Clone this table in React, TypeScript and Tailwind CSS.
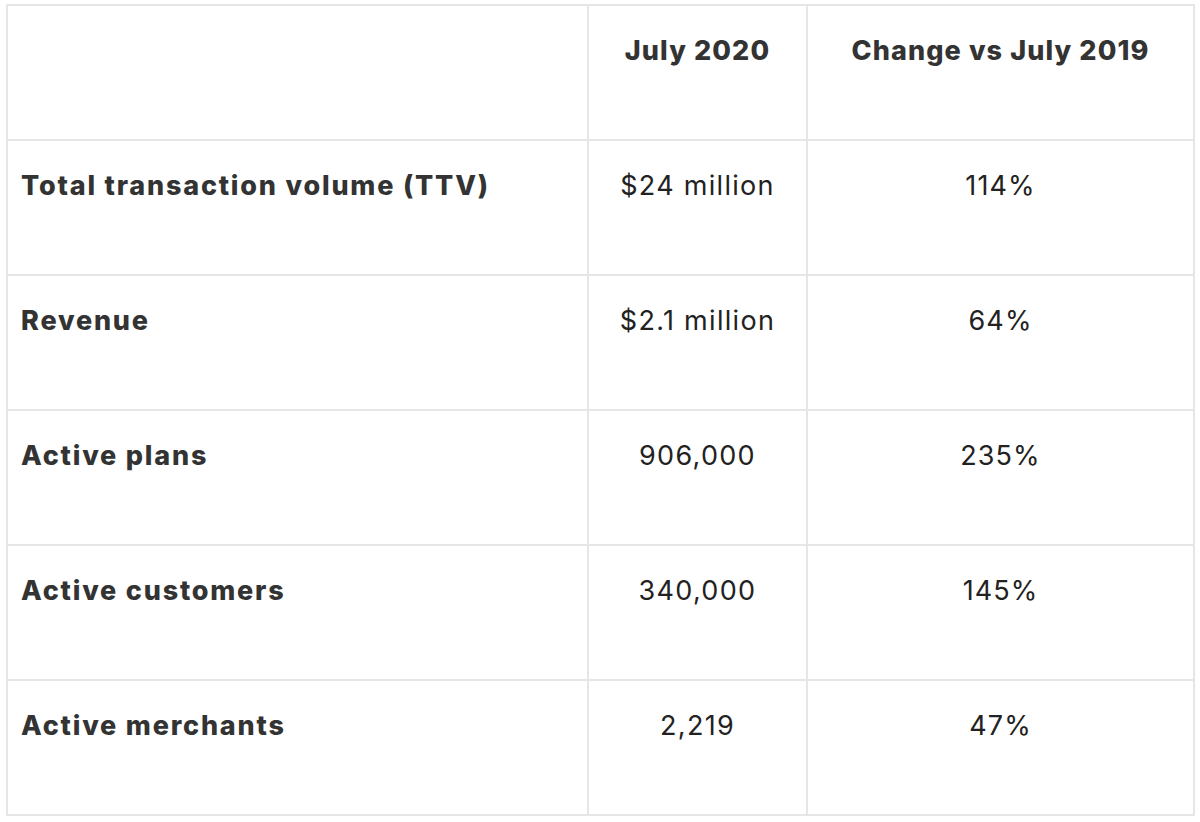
const rows = [
  { label: 'Total transaction volume (TTV)', value: '$24 million', change: '114%' },
  { label: 'Revenue', value: '$2.1 million', change: '64%' },
  { label: 'Active plans', value: '906,000', change: '235%' },
  { label: 'Active customers', value: '340,000', change: '145%' },
  { label: 'Active merchants', value: '2,219', change: '47%' },
];

export default function App() {
  return (
    <div className="min-h-[822px] bg-white pt-[4px] pl-[6px] font-['Inter','Liberation_Sans',sans-serif] text-[#333]">
      <table className="w-[1187px] table-fixed border-collapse">
        <colgroup>
          <col className="w-[581px]" />
          <col className="w-[219px]" />
          <col className="w-[387px]" />
        </colgroup>
        <thead>
          <tr className="h-[135px]">
            <th className="border-2 border-[#e6e6e6]" />
            <th className="border-2 border-[#e6e6e6] pt-[25px] align-top text-center text-[27px] leading-[39px] font-extrabold tracking-[1.1px]">
              July 2020
            </th>
            <th className="border-2 border-[#e6e6e6] pt-[25px] align-top text-center text-[27px] leading-[39px] font-extrabold tracking-[1.1px]">
              Change vs July 2019
            </th>
          </tr>
        </thead>
        <tbody>
          {rows.map((r) => (
            <tr key={r.label} className="h-[135px]">
              <td className="border-2 border-[#e6e6e6] pl-[13px] pr-[15px] pt-[25px] align-top text-[27px] leading-[39px] font-extrabold tracking-[1.8px]">
                {r.label}
              </td>
              <td className="border-2 border-[#e6e6e6] pt-[25px] align-top text-center text-[27px] leading-[39px] text-[#222] tracking-[1.3px]">
                {r.value}
              </td>
              <td className="border-2 border-[#e6e6e6] pt-[25px] align-top text-center text-[27px] leading-[39px] text-[#222] tracking-[1.1px]">
                {r.change}
              </td>
            </tr>
          ))}
        </tbody>
      </table>
    </div>
  );
}
